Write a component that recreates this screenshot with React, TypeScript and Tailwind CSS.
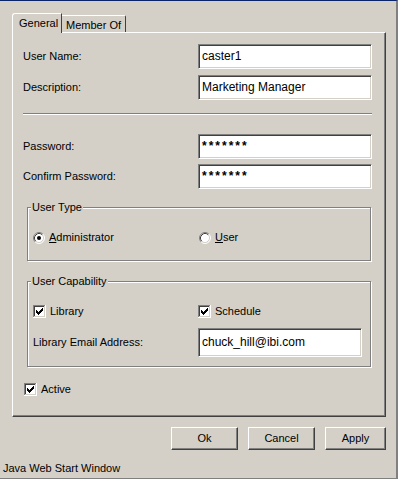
import React from 'react'

const sunken =
  'bg-white border border-t-[#808080] border-l-[#808080] border-b-white border-r-white shadow-[inset_1px_1px_0_#404040,inset_-1px_-1px_0_#d4d0c8]'
const raised =
  'bg-[#d4d0c8] border border-t-white border-l-white border-b-[#404040] border-r-[#404040] shadow-[inset_-1px_-1px_0_#808080]'
const etched =
  'border border-[#808080] shadow-[inset_1px_1px_0_#fff,1px_1px_0_#fff]'

function Check() {
  const ticks = [
    [3, 5], [4, 6], [5, 7], [6, 6], [7, 5], [8, 4], [9, 3],
  ]
  return (
    <svg width="13" height="13" viewBox="0 0 13 13" className="shrink-0" shapeRendering="crispEdges">
      <rect x="0" y="0" width="13" height="13" fill="#fff" />
      <rect x="0" y="0" width="12" height="1" fill="#808080" />
      <rect x="0" y="0" width="1" height="12" fill="#808080" />
      <rect x="1" y="1" width="10" height="1" fill="#404040" />
      <rect x="1" y="1" width="1" height="10" fill="#404040" />
      <rect x="1" y="11" width="11" height="1" fill="#d4d0c8" />
      <rect x="11" y="1" width="1" height="11" fill="#d4d0c8" />
      {ticks.map(([x, y]) => (
        <rect key={x} x={x} y={y} width="1" height="3" fill="#000" />
      ))}
    </svg>
  )
}

function Radio({ on }: { on?: boolean }) {
  return (
    <svg width="12" height="12" viewBox="0 0 12 12" className="shrink-0">
      <circle cx="6" cy="6" r="5" fill="#fff" />
      <path d="M2.11 9.89A5.5 5.5 0 0 1 9.89 2.11" fill="none" stroke="#808080" />
      <path d="M9.89 2.11A5.5 5.5 0 0 1 2.11 9.89" fill="none" stroke="#fff" />
      <path d="M2.82 9.18A4.5 4.5 0 0 1 9.18 2.82" fill="none" stroke="#404040" />
      <path d="M9.18 2.82A4.5 4.5 0 0 1 2.82 9.18" fill="none" stroke="#d4d0c8" />
      {on && <circle cx="6" cy="6" r="2" fill="#000" />}
    </svg>
  )
}

function Field({ label, value, pw }: { label: string; value: string; pw?: boolean }) {
  return (
    <div className="flex items-center h-[25px]">
      <span className="w-[175px]">{label}</span>
      <div className={`${sunken} w-[174px] h-[25px] flex items-center pl-[3px] text-[12px]`}>
        {pw ? <span className="font-bold tracking-[2px]">{value}</span> : value}
      </div>
    </div>
  )
}

export default function App() {
  return (
    <div className="w-[398px] h-[479px] bg-[#d4d0c8] border-t border-t-[#0a246a] border-r-2 border-r-[#808080] border-b border-b-[#808080] flex flex-col text-[11px] leading-[13px] text-black font-['Liberation_Sans',Arial,sans-serif]">
      {/* Tabs */}
      <div className="flex items-end pl-[12px] pt-[12px] relative z-10 -mb-[1px]">
        <div className="w-[50px] h-[20px] pl-[6px] pt-[3px] bg-[#d4d0c8] border-t border-l border-t-white border-l-white border-r border-r-[#404040] rounded-tl-[3px]">
          General
        </div>
        <div className="w-[64px] h-[17px] mb-[1px] pl-[4px] pt-[3px] border-t border-t-white border-r border-r-[#404040] rounded-tr-[2px]">
          Member Of
        </div>
      </div>

      {/* Panel */}
      <div className={`${raised} ml-[12px] w-[374px] h-[385px] px-[10px] pt-[11px] flex flex-col`}>
        <Field label="User Name:" value="caster1" />
        <div className="mt-[6px]">
          <Field label="Description:" value="Marketing Manager" />
        </div>
        <div className="mt-[13px] w-[349px] border-t border-t-[#808080] border-b border-b-white" />
        <div className="mt-[19px]">
          <Field label="Password:" value="*******" pw />
        </div>
        <div className="mt-[5px]">
          <Field label="Confirm Password:" value="*******" pw />
        </div>

        <fieldset className={`${etched} mt-[11px] ml-[4px] w-[344px] h-[61px]`}>
          <legend className="ml-[3px] px-[1px] leading-[14px] bg-[#d4d0c8]">User Type</legend>
          <div className="flex items-center mt-[17px] pl-[5px]">
            <div className="w-[166px] flex items-center gap-[4px]">
              <Radio on />
              <span>
                <u>A</u>dministrator
              </span>
            </div>
            <div className="flex items-center gap-[4px]">
              <Radio />
              <span>
                <u>U</u>ser
              </span>
            </div>
          </div>
        </fieldset>

        <fieldset className={`${etched} mt-[13px] ml-[4px] w-[344px] h-[93px]`}>
          <legend className="ml-[3px] px-[1px] leading-[14px] bg-[#d4d0c8]">User Capability</legend>
          <div className="flex items-center mt-[17px] pl-[5px]">
            <div className="w-[165px] flex items-center gap-[4px]">
              <Check />
              <span>Library</span>
            </div>
            <div className="flex items-center gap-[4px]">
              <Check />
              <span>Schedule</span>
            </div>
          </div>
          <div className="flex items-center mt-[10px] pl-[5px]">
            <span className="w-[165px]">Library Email Address:</span>
            <div className={`${sunken} w-[164px] h-[29px] flex items-center pl-[3px] text-[12px]`}>
              chuck_hill@ibi.com
            </div>
          </div>
        </fieldset>

        <div className="flex items-center gap-[4px] mt-[16px] ml-[1px]">
          <Check />
          <span>Active</span>
        </div>
      </div>

      {/* Buttons */}
      <div className="ml-[12px] w-[374px] mt-[10px] flex justify-end gap-[10px]">
        <button className={`${raised} w-[67px] h-[23px]`}>Ok</button>
        <button className={`${raised} w-[67px] h-[23px]`}>Cancel</button>
        <button className={`${raised} w-[61px] h-[23px]`}>Apply</button>
      </div>

      <div className="mt-[12px] pl-[3px]">Java Web Start Window</div>
    </div>
  )
}
